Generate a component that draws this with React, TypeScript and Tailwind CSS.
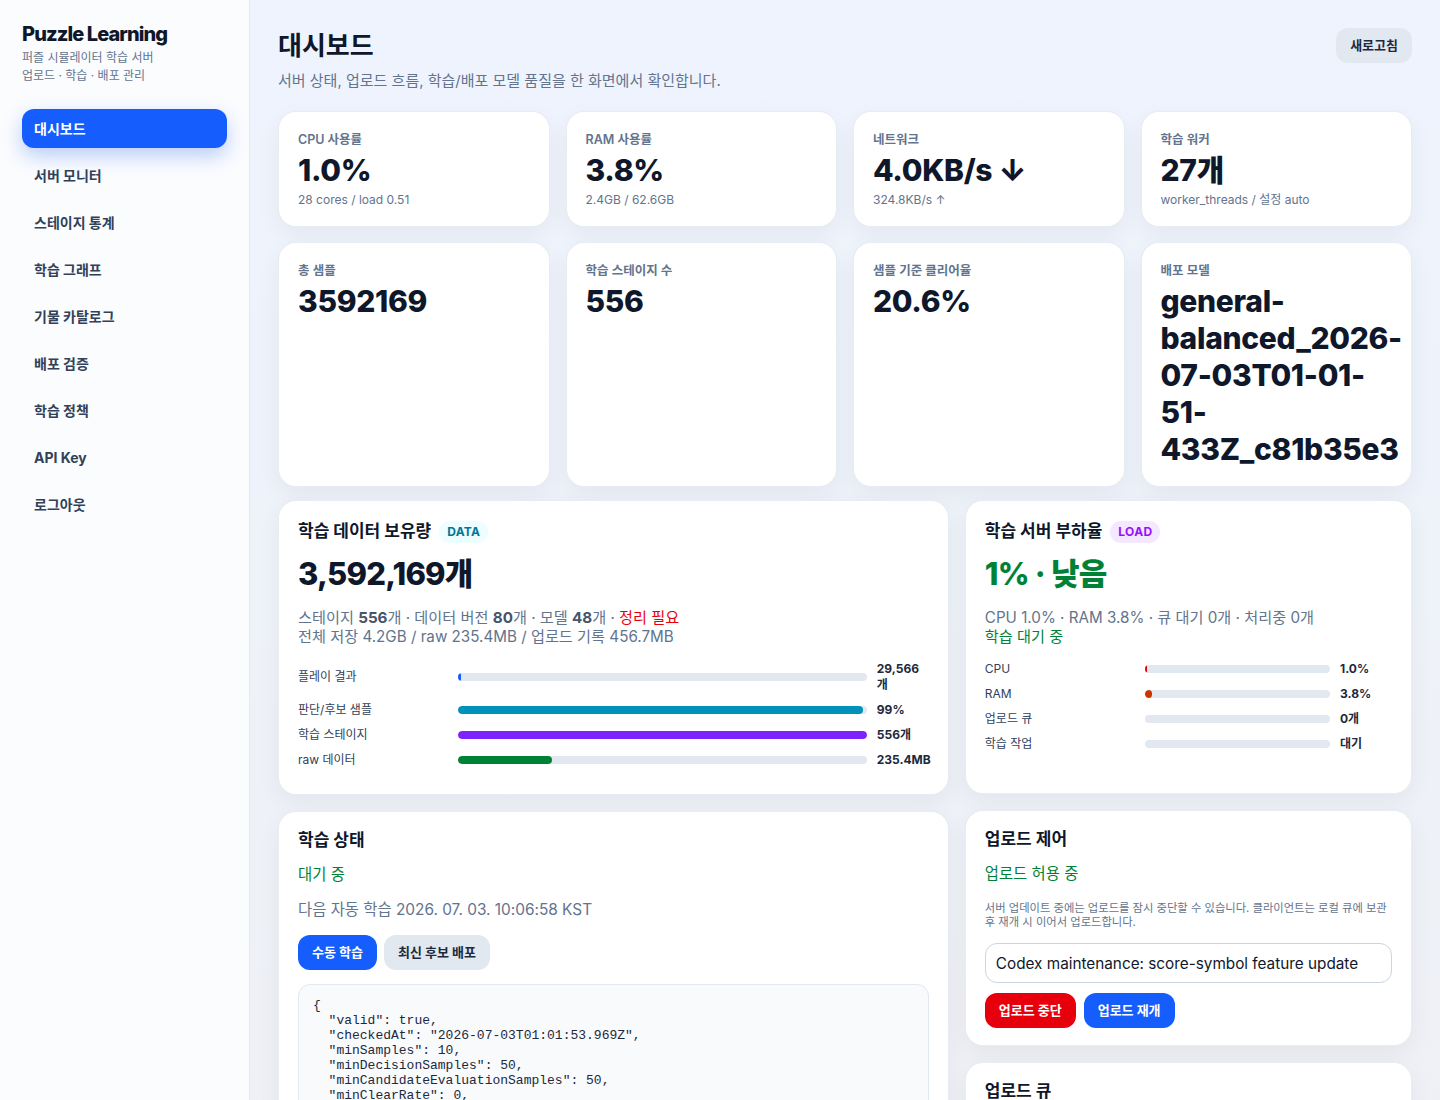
import React from "react"

const FONT = { fontFamily: 'Inter, "Noto Sans CJK KR", sans-serif' }

const navItems = ["대시보드", "서버 모니터", "스테이지 통계", "학습 그래프", "기물 카탈로그", "배포 검증", "학습 정책", "API Key", "로그아웃"]

function Card({ className = "", children }: { className?: string; children: React.ReactNode }) {
  return (
    <div className={`rounded-[18px] border border-slate-200/80 bg-white shadow-[0_8px_24px_rgba(15,23,42,0.05)] ${className}`}>
      {children}
    </div>
  )
}

function Stat({ label, value, sub }: { label: string; value: string; sub?: string }) {
  return (
    <Card className="px-[19px] pt-[20px] pb-[18px]">
      <div className="text-[12.5px] font-semibold leading-4 text-slate-500">{label}</div>
      <div className="mt-[4px] text-[30px] font-extrabold leading-[37px] tracking-[-0.01em] text-slate-900">{value}</div>
      {sub && <div className="mt-[3px] text-xs leading-4 text-slate-500">{sub}</div>}
    </Card>
  )
}

function BarRow({ label, pct, color, value }: { label: string; pct: number; color: string; value: string }) {
  return (
    <>
      <div className="text-xs leading-4 text-slate-700">{label}</div>
      <div className="h-2 rounded-full bg-slate-200 overflow-hidden">
        <div className={`h-full rounded-full ${color}`} style={{ width: `${pct}%` }} />
      </div>
      <div className="text-xs font-bold leading-4 text-slate-800">{value}</div>
    </>
  )
}

const json = `{
  "valid": true,
  "checkedAt": "2026-07-03T01:01:53.969Z",
  "minSamples": 10,
  "minDecisionSamples": 50,
  "minCandidateEvaluationSamples": 50,
  "minClearRate": 0,
  "maxRegression": 0.02,
  "candidate": "general-balanced_2026-07-03T01-01-51-433Z_c81b35e3"
}`

export default function App() {
  return (
    <div className="flex min-h-screen text-slate-900" style={FONT}>
      {/* Sidebar */}
      <aside className="w-[250px] shrink-0 border-r border-slate-200 bg-[#fbfcfe] px-[22px] pt-[22px]">
        <div className="text-[20px] font-extrabold leading-6 tracking-[-0.045em] text-slate-900">Puzzle Learning</div>
        <div className="mt-[3px] text-xs leading-[18px] text-slate-500">
          퍼즐 시뮬레이터 학습 서버
          <br />
          업로드 · 학습 · 배포 관리
        </div>
        <nav className="mt-[24px] flex flex-col gap-2">
          {navItems.map((item, i) => (
            <div
              key={item}
              className={`flex h-[39px] items-center rounded-xl pl-3 text-sm font-bold ${
                i === 0 ? "bg-blue-600 text-white shadow-[0_8px_20px_rgba(37,99,235,0.3)]" : "text-slate-700"
              }`}
            >
              {item}
            </div>
          ))}
        </nav>
      </aside>

      {/* Main */}
      <main className="flex-1 bg-gradient-to-b from-[#eef4fe] to-[#eef0f4] px-7 pt-[30px] pb-10">
        <div className="mb-[19px] flex items-start justify-between">
          <div>
            <h1 className="text-[26px] font-bold leading-8 text-slate-900">대시보드</h1>
            <p className="mt-[8px] text-[15px] leading-[22px] text-slate-500">서버 상태, 업로드 흐름, 학습/배포 모델 품질을 한 화면에서 확인합니다.</p>
          </div>
          <button className="-mt-[2px] h-[35px] rounded-xl bg-slate-200 px-[14px] text-[13px] font-bold text-slate-800">새로고침</button>
        </div>

        <div className="grid grid-cols-4 gap-x-4 gap-y-[15px]">
          <Stat label="CPU 사용률" value="1.0%" sub="28 cores / load 0.51" />
          <Stat label="RAM 사용률" value="3.8%" sub="2.4GB / 62.6GB" />
          <Stat label="네트워크" value="4.0KB/s ↓" sub="324.8KB/s ↑" />
          <Stat label="학습 워커" value="27개" sub="worker_threads / 설정 auto" />
          <Stat label="총 샘플" value="3592169" />
          <Stat label="학습 스테이지 수" value="556" />
          <Stat label="샘플 기준 클리어율" value="20.6%" />
          <Stat label="배포 모델" value="general-balanced_2026-07-03T01-01-51-433Z_c81b35e3" />
        </div>

        <div className="mt-[13px] grid grid-cols-[3fr_2fr] items-start gap-4">
          {/* Left column */}
          <div className="flex flex-col gap-4">
            <Card className="px-[19px] pt-[19px] pb-[26px]">
              <div className="flex h-6 items-center gap-2">
                <span className="text-[17px] font-bold text-slate-900">학습 데이터 보유량</span>
                <span className="rounded-full bg-cyan-50 px-2 py-[3px] text-xs font-bold leading-4 tracking-wide text-cyan-700">DATA</span>
              </div>
              <div className="mt-[10px] text-[31px] font-extrabold leading-10 tracking-tight text-slate-900">3,592,169개</div>
              <div className="mt-[14px] text-[15.2px] leading-[19px] text-slate-500">
                스테이지 <b className="text-slate-600">556</b>개 · 데이터 버전 <b className="text-slate-600">80</b>개 · 모델 <b className="text-slate-600">48</b>개 · <span className="text-red-600">정리 필요</span>
                <br />
                전체 저장 4.2GB / raw 235.4MB / 업로드 기록 456.7MB
              </div>
              <div className="mt-[15px] grid grid-cols-[150px_1fr_52px] items-center gap-x-[10px] gap-y-[9px]">
                <BarRow label="플레이 결과" pct={0.8} color="bg-blue-600" value="29,566개" />
                <BarRow label="판단/후보 샘플" pct={99} color="bg-cyan-600" value="99%" />
                <BarRow label="학습 스테이지" pct={100} color="bg-violet-600" value="556개" />
                <BarRow label="raw 데이터" pct={23} color="bg-green-700" value="235.4MB" />
              </div>
            </Card>

            <Card className="px-[19px] pt-[16px] pb-5">
              <div className="text-[17px] font-bold leading-6 text-slate-900">학습 상태</div>
              <div className="mt-[11px] text-[15.4px] leading-6 text-green-700">대기 중</div>
              <div className="mt-[11px] text-[15.4px] leading-6 text-slate-500">다음 자동 학습 2026. 07. 03. 10:06:58 KST</div>
              <div className="mt-[13px] flex gap-[7px]">
                <button className="h-[35px] rounded-xl bg-blue-600 px-[14px] text-[13px] font-bold text-white">수동 학습</button>
                <button className="h-[35px] rounded-xl bg-slate-200 px-[14px] text-[13px] font-bold text-slate-800">최신 후보 배포</button>
              </div>
              <pre
                className="mt-[14px] rounded-xl border border-slate-200 bg-slate-50 px-[14px] py-[13px] text-[13px] leading-[15px] text-slate-800"
                style={{ fontFamily: '"Liberation Mono", monospace' }}
              >
                {json}
              </pre>
            </Card>
          </div>

          {/* Right column */}
          <div className="flex flex-col gap-4">
            <Card className="px-[19px] pt-[19px] pb-[41px]">
              <div className="flex h-6 items-center gap-2">
                <span className="text-[17px] font-bold text-slate-900">학습 서버 부하율</span>
                <span className="rounded-full bg-purple-100 px-2 py-[3px] text-xs font-bold leading-4 tracking-wide text-purple-600">LOAD</span>
              </div>
              <div className="mt-[10px] text-[31px] font-extrabold leading-10 tracking-tight text-green-700">1% · 낮음</div>
              <div className="mt-[14px] text-[15.2px] leading-[19px] text-slate-500">
                CPU 1.0% · RAM 3.8% · 큐 대기 0개 · 처리중 0개
                <br />
                <span className="text-green-700">학습 대기 중</span>
              </div>
              <div className="mt-[15px] grid grid-cols-[150px_1fr_52px] items-center gap-x-[10px] gap-y-[9px]">
                <BarRow label="CPU" pct={1} color="bg-red-600" value="1.0%" />
                <BarRow label="RAM" pct={3.8} color="bg-orange-700" value="3.8%" />
                <BarRow label="업로드 큐" pct={0} color="bg-blue-600" value="0개" />
                <BarRow label="학습 작업" pct={0} color="bg-blue-600" value="대기" />
              </div>
            </Card>

            <Card className="px-[19px] pt-[16px] pb-[17px]">
              <div className="text-[17px] font-bold leading-6 text-slate-900">업로드 제어</div>
              <div className="mt-[11px] text-[15.4px] leading-6 text-green-700">업로드 허용 중</div>
              <p className="mt-[15px] text-[11.3px] leading-[14px] text-slate-500">
                서버 업데이트 중에는 업로드를 잠시 중단할 수 있습니다. 클라이언트는 로컬 큐에 보관 후 재개 시 이어서 업로드합니다.
              </p>
              <input
                readOnly
                value="Codex maintenance: score-symbol feature update"
                className="mt-[14px] h-10 w-full rounded-xl border border-slate-300 bg-white px-[10px] text-[15.3px] text-slate-900 outline-none"
              />
              <div className="mt-[10px] flex gap-2">
                <button className="h-[35px] rounded-xl bg-red-600 px-[14px] text-[13px] font-bold text-white">업로드 중단</button>
                <button className="h-[35px] rounded-xl bg-blue-600 px-[14px] text-[13px] font-bold text-white">업로드 재개</button>
              </div>
            </Card>

            <Card className="px-[19px] pt-[16px] pb-5">
              <div className="text-[17px] font-bold leading-6 text-slate-900">업로드 큐</div>
              <div className="mt-[11px] text-[15.4px] leading-6 text-slate-500">대기 0개 · 처리중 0개</div>
            </Card>
          </div>
        </div>
      </main>
    </div>
  )
}
